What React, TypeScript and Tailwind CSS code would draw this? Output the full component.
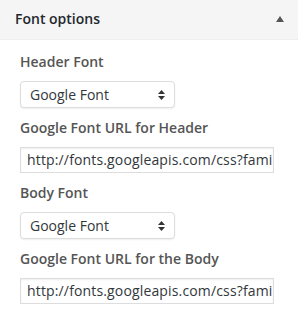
import React from "react";

const font = { fontFamily: '"Open Sans", "Noto Sans", Arial, sans-serif' };

function SelectBox() {
  return (
    <div className="mt-[9px] flex h-[27px] w-[155px] items-center justify-between rounded-[4px] border border-[#dddddd] bg-white pl-[9px] pr-[8px] text-[14px] text-[#32373c] shadow-[0_1px_2px_rgba(0,0,0,0.07)]">
      <span className="leading-[20px]">Google Font</span>
      <svg width="7" height="10" viewBox="0 0 7 10" className="mr-[1px]">
        <polygon points="3.5,0 7,4 0,4" fill="#333" />
        <polygon points="0,6 7,6 3.5,10" fill="#333" />
      </svg>
    </div>
  );
}

function UrlInput() {
  return (
    <div className="mt-[9px] flex h-[26px] w-[254px] items-center overflow-hidden border border-[#dddddd] bg-white pl-[6px] text-[14px] tracking-[0.15px] text-[#32373c] shadow-[inset_0_1px_2px_rgba(0,0,0,0.07)]">
      <span className="whitespace-nowrap leading-[20px]">
        http://fonts.googleapis.com/css?family=Open+Sans
      </span>
    </div>
  );
}

function Label({ children }: { children: React.ReactNode }) {
  return (
    <div className="text-[14px] font-semibold leading-[20px] text-[#555555]">
      {children}
    </div>
  );
}

export default function App() {
  return (
    <div className="h-[323px] w-[298px] bg-white" style={font}>
      <div className="flex h-[40px] items-center justify-between border-b border-[#eeeeee] bg-[#f5f5f5] pl-[15px] pr-[14px] pb-[3px]">
        <span className="text-[14px] font-semibold text-[#23282d]">
          Font options
        </span>
        <svg width="8" height="6" viewBox="0 0 8 6" className="mt-[1px]">
          <polygon points="4,0 8,6 0,6" fill="#555" />
        </svg>
      </div>
      <div className="px-[20px] pt-[12px]">
        <div>
          <Label>Header Font</Label>
          <SelectBox />
        </div>
        <div className="mt-[10px]">
          <Label>Google Font URL for Header</Label>
          <UrlInput />
        </div>
        <div className="mt-[10px]">
          <Label>Body Font</Label>
          <SelectBox />
        </div>
        <div className="mt-[10px]">
          <Label>Google Font URL for the Body</Label>
          <UrlInput />
        </div>
      </div>
    </div>
  );
}
